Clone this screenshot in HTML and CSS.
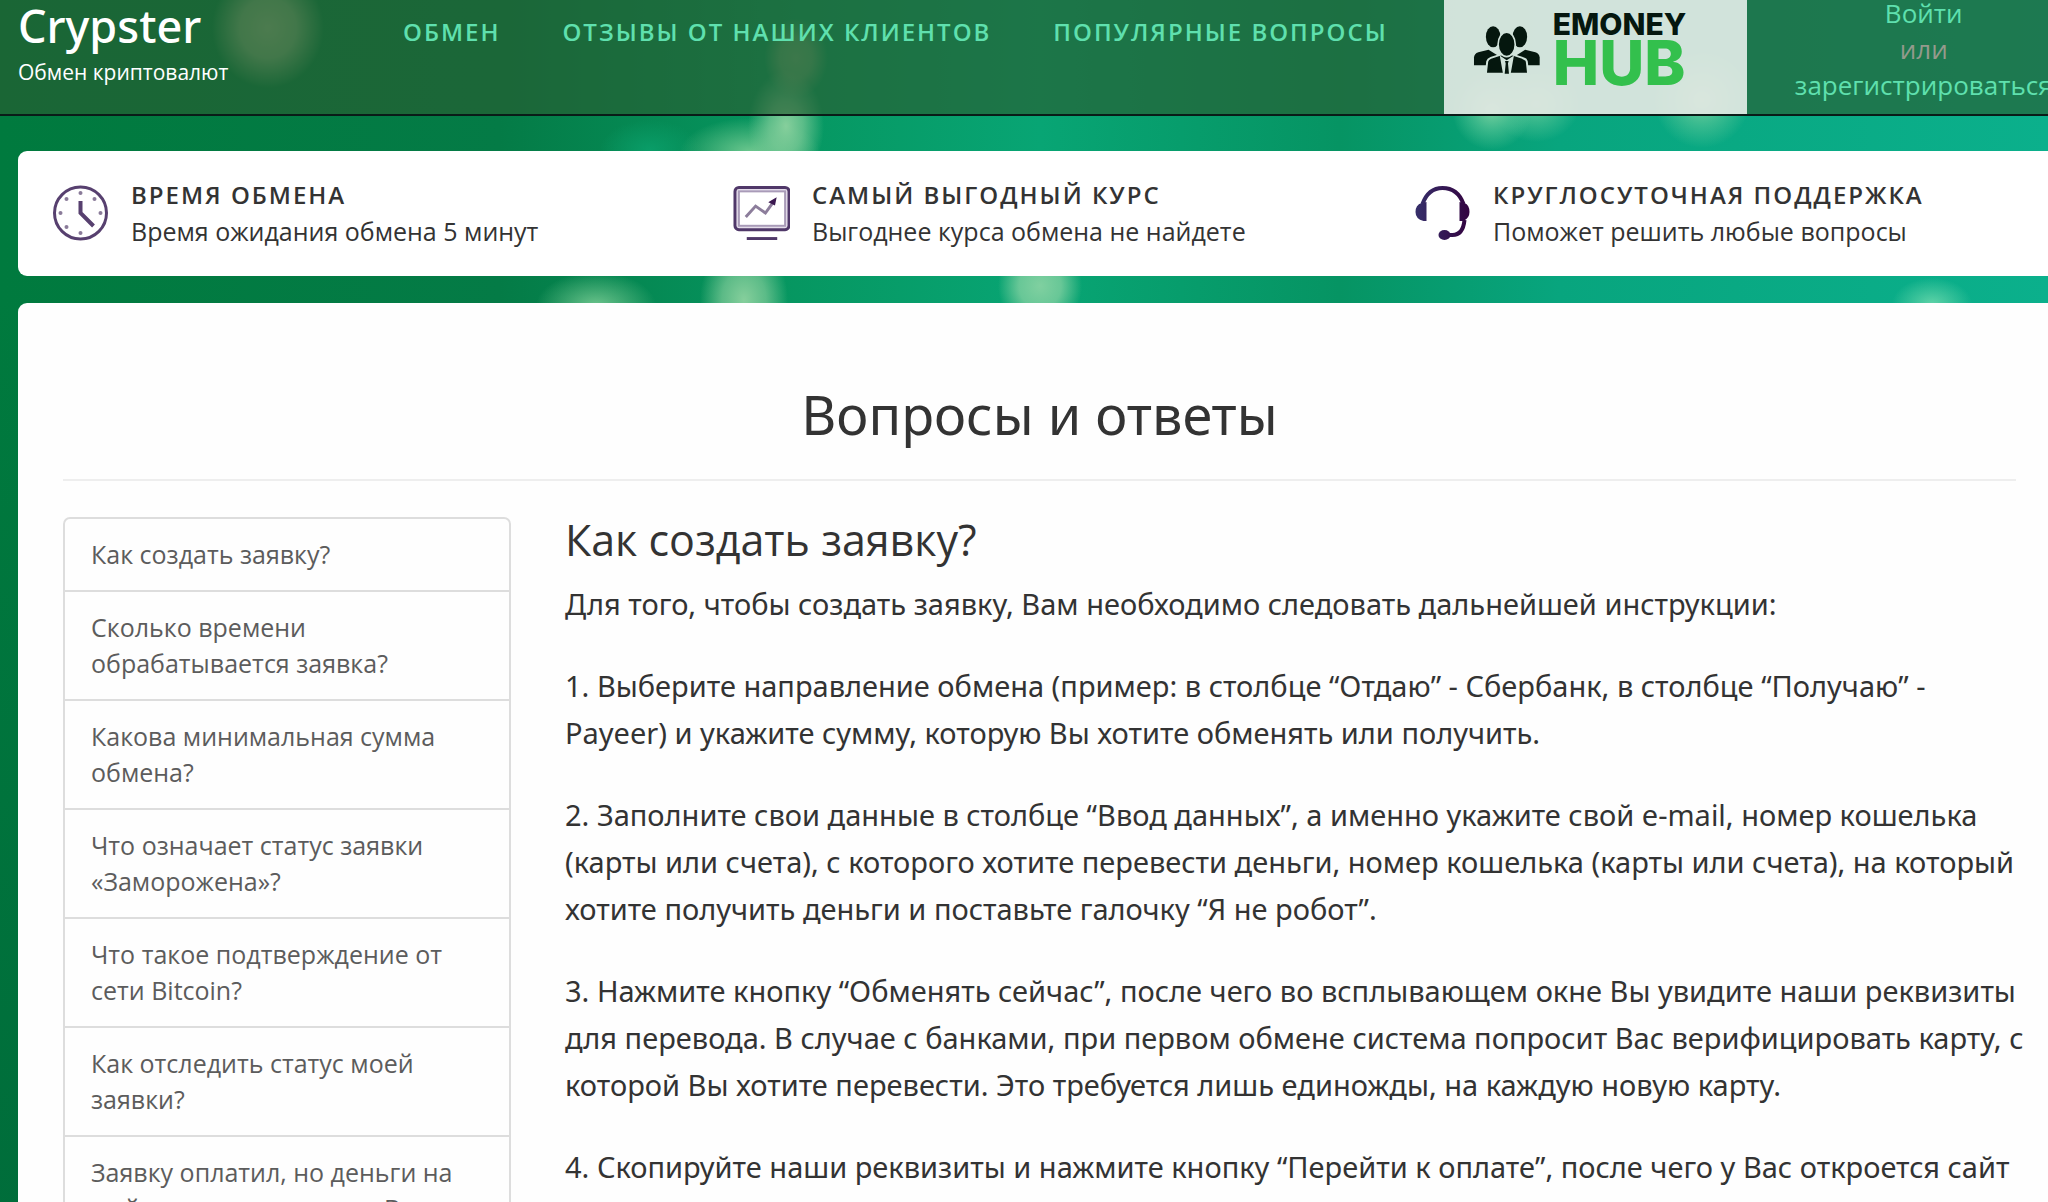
FILE: index.html
```
<!DOCTYPE html>
<html lang="ru">
<head>
<meta charset="utf-8">
<title>Crypster — Вопросы и ответы</title>
<link rel="stylesheet" href="styles.css">
</head>
<body>
<header class="header">
  <a class="brand" href="#">
    <span class="brand-name">Crypster</span>
    <span class="brand-note">Обмен криптовалют</span>
  </a>
  <nav class="nav">
    <a href="#">ОБМЕН</a>
    <a href="#">ОТЗЫВЫ ОТ НАШИХ КЛИЕНТОВ</a>
    <a href="#">ПОПУЛЯРНЫЕ ВОПРОСЫ</a>
  </nav>
  <a class="partner" href="#">
    <svg class="partner-icon" viewBox="96 74 206 150" aria-hidden="true">
      <g fill="#000">
        <ellipse cx="157" cy="109" rx="22" ry="32"/>
        <ellipse cx="238" cy="109" rx="22" ry="32"/>
        <path d="M99 195V172Q100 160 112 156L143 148L170 165V195Z"/>
        <path d="M298 195V172Q297 160 285 156L254 148L228 165V195Z"/>
      </g>
      <path d="M135 221L139 184Q141 176 150 173L180 163H216L246 173Q257 176 259 184L263 221Z" fill="#000" stroke="#fff" stroke-width="6"/>
      <ellipse cx="198" cy="132" rx="26" ry="37" fill="#000" stroke="#fff" stroke-width="5"/>
      <path d="M177 166L187 222H210L220 166L198 180Z" fill="#fff"/>
      <path d="M193 182H204L202 190L205 221H192L195 190Z" fill="#000"/>
    </svg>
    <span class="partner-name"><span class="partner-top">EMONEY</span><span class="partner-hub">HUB</span></span>
  </a>
  <div class="account">
    <a href="#">Войти</a>
    <span>или</span>
    <a href="#">зарегистрироваться</a>
  </div>
</header>

<div class="page">
  <section class="features">
    <div class="feature">
      <svg class="feature-icon" viewBox="0 0 56 56" fill="none" stroke="#57406f" aria-hidden="true">
        <circle cx="28" cy="28" r="26" stroke-width="3"/>
        <path d="M28 16V28L41 41" stroke-width="4"/>
        <g fill="#8a7b99" stroke="none">
          <circle cx="28" cy="8" r="2"/><circle cx="42" cy="14" r="2"/><circle cx="48" cy="28" r="2"/><circle cx="28" cy="48" r="2"/>
          <circle cx="14" cy="42" r="2"/><circle cx="8" cy="28" r="2"/><circle cx="14" cy="14" r="2"/>
        </g>
      </svg>
      <div><h3>ВРЕМЯ ОБМЕНА</h3><p>Время ожидания обмена 5 минут</p></div>
    </div>
    <div class="feature">
      <svg class="feature-icon" viewBox="0 0 58 56" fill="none" stroke="#503869" aria-hidden="true">
        <rect x="2" y="2" width="55" height="43" rx="4" fill="#e4dcea" stroke-width="3"/>
        <rect x="6" y="6" width="47" height="35" fill="#fff" stroke="#a99bb8" stroke-width="2"/>
        <path d="M13 32L23 21L33 28L41 17" stroke="#8c7d9b" stroke-width="3"/>
        <path d="M38 17L43 14L42 19Z" fill="#3b1850" stroke="#3b1850" stroke-width="2"/>
        <path d="M14 54H45" stroke-width="3"/>
      </svg>
      <div><h3>САМЫЙ ВЫГОДНЫЙ КУРС</h3><p>Выгоднее курса обмена не найдете</p></div>
    </div>
    <div class="feature">
      <svg class="feature-icon" viewBox="0 0 56 56" fill="none" aria-hidden="true">
        <defs><linearGradient id="violet" x1="0" x2="56" y1="0" y2="0" gradientUnits="userSpaceOnUse"><stop offset="0" stop-color="#36306b"/><stop offset="1" stop-color="#33023f"/></linearGradient></defs>
        <path d="M8 19C12 8 18 3 28 3S45 8 49 19M50 35C49 45 45 50 38 50H31" stroke="url(#violet)" stroke-width="4"/>
        <path d="M12 17V36H9Q1 34 1 27Q1 20 7 18ZM45 17V36H49Q55 33 55 27Q55 20 50 18Z" fill="url(#violet)"/>
        <ellipse cx="30" cy="50" rx="6" ry="5" fill="url(#violet)"/>
      </svg>
      <div><h3>КРУГЛОСУТОЧНАЯ ПОДДЕРЖКА</h3><p>Поможет решить любые вопросы</p></div>
    </div>
  </section>

  <main class="card">
    <h1>Вопросы и ответы</h1>
    <div class="faq">
      <ul class="topics">
        <li><a href="#">Как создать заявку?</a></li>
        <li><a href="#">Сколько времени обрабатывается заявка?</a></li>
        <li><a href="#">Какова минимальная сумма обмена?</a></li>
        <li><a href="#">Что означает статус заявки «Заморожена»?</a></li>
        <li><a href="#">Что такое подтверждение от сети Bitcoin?</a></li>
        <li><a href="#">Как отследить статус моей заявки?</a></li>
        <li><a href="#">Заявку оплатил, но деньги на мой счет не поступили. В чем причина?</a></li>
      </ul>
      <article class="answer">
        <h2>Как создать заявку?</h2>
        <p>Для того, чтобы создать заявку, Вам необходимо следовать дальнейшей инструкции:</p>
        <p>1. Выберите направление обмена (пример: в столбце “Отдаю” - Сбербанк, в столбце “Получаю” - Payeer) и укажите сумму, которую Вы хотите обменять или получить.</p>
        <p>2. Заполните свои данные в столбце “Ввод данных”, а именно укажите свой e-mail, номер кошелька (карты или счета), с которого хотите перевести деньги, номер кошелька (карты или счета), на который хотите получить деньги и поставьте галочку “Я не робот”.</p>
        <p>3. Нажмите кнопку “Обменять сейчас”, после чего во всплывающем окне Вы увидите наши реквизиты для перевода. В случае с банками, при первом обмене система попросит Вас верифицировать карту, с которой Вы хотите перевести. Это требуется лишь единожды, на каждую новую карту.</p>
        <p>4. Скопируйте наши реквизиты и нажмите кнопку “Перейти к оплате”, после чего у Вас откроется сайт</p>
      </article>
    </div>
  </main>
</div>
</body>
</html>
```
FILE: styles.css
```
* { box-sizing: border-box; margin: 0; }

html { scrollbar-width: none; }

body {
  font-family: "Open Sans", "Noto Sans", sans-serif;
  font-size: 25px;
  line-height: 36px;
  color: #333;
  overflow-x: hidden;
  min-height: 100vh;
  background:
    radial-gradient(ellipse 56px 60px at 268px 28px, #8fb585 0, #8fb585cc 50%, transparent 100%),
    radial-gradient(ellipse 32px 40px at 796px 58px, #8fb585aa 0, #8fb58588 50%, transparent 100%),
    radial-gradient(ellipse 38px 56px at 786px 126px, #86cf9c 0, #86cf9caa 45%, transparent 100%),
    radial-gradient(ellipse 70px 34px at 750px 152px, #6cc78e 0, transparent 100%),
    radial-gradient(ellipse 50px 30px at 650px 150px, #0a9d68 0, transparent 100%),
    radial-gradient(ellipse 44px 60px at 744px 300px, #86cf9c 0, #86cf9caa 50%, transparent 100%),
    radial-gradient(ellipse 60px 34px at 596px 306px, #6cc48c 0, transparent 100%),
    radial-gradient(ellipse 42px 44px at 1040px 286px, #80d0a0 0, #80d0a0cc 50%, transparent 100%),
    radial-gradient(ellipse 40px 40px at 1492px 110px, #74cf9f 0, #5cc89999 50%, transparent 100%),
    radial-gradient(ellipse 44px 38px at 1536px 104px, #5cc899 0, transparent 100%),
    radial-gradient(ellipse 48px 48px at 1702px 100px, #74cf9f 0, #5cc89999 50%, transparent 100%),
    radial-gradient(ellipse 40px 26px at 1932px 304px, #5fd3a8 0, transparent 100%),
    linear-gradient(to bottom, transparent 300px, #00653899 1200px),
    linear-gradient(to right, #007a3e 0, #047b46 500px, #069660 780px, #08a574 1040px, #069463 1340px, #08a57e 1560px, #0bb08c 2048px);
}

a { color: inherit; text-decoration: none; }

.header {
  display: flex;
  align-items: flex-start;
  border-bottom: 2px solid #0a1c18;
  background: rgba(40, 92, 49, .65);
}

.brand { display: flex; flex: none; flex-direction: column; width: 385px; padding-left: 18px; color: #fff; }
.brand-name { font-family: "Noto Sans", "Open Sans", sans-serif; font-size: 45px; font-weight: 500; line-height: 52px; }
.brand-note { font-size: 21px; line-height: 40px; }

.nav {
  display: flex;
  flex: none;
  gap: 62px;
  padding: 14px 56px 0 18px;
  font-size: 24px;
  font-weight: 600;
  letter-spacing: 2px;
  white-space: nowrap;
  color: #5fe0ae;
}

.partner {
  display: flex;
  gap: 12px;
  flex: none;
  width: 303px;
  height: 114px;
  padding-left: 29px;
  background: #fff;
  opacity: .8;
  color: #000;
}
.partner-icon { width: 68px; height: 50px; margin-top: 25px; }
.partner-name { display: flex; flex-direction: column; font-family: Inter, sans-serif; font-weight: 800; }
.partner-top { font-size: 30px; line-height: 28px; padding-top: 10px; }
.partner-hub { font-size: 62px; line-height: 50px; color: #39d34d; }

.account {
  display: flex;
  flex-direction: column;
  align-items: center;
  flex: none;
  width: 260px;
  margin: -5px 0 0 47px;
  font-size: 26px;
  color: #5fe0ae;
}
.account span { color: #949a8c; }

.page { margin: 35px -13px 0 18px; display: flex; flex-direction: column; gap: 27px; }

.features {
  display: grid;
  grid-template-columns: repeat(3, 1fr);
  padding: 26px 0 27px;
  border-radius: 9px;
  background: #fff;
}
.feature { display: flex; align-items: center; gap: 22px; padding-left: 34px; }
.feature-icon { width: 57px; height: 56px; flex: none; }
.feature h3 { font-size: 24px; font-weight: 600; letter-spacing: 2px; }

.card { padding: 81px 45px 36px; border-radius: 9px; background: #fefefe; }
.card h1 {
  padding-bottom: 35px;
  border-bottom: 2px solid #eee;
  font: 400 54px/60px "Noto Sans", "Open Sans", sans-serif;
  text-align: center;
}

.faq { display: flex; align-items: flex-start; gap: 54px; margin: 36px -13px 0 0; }

.topics {
  flex: none;
  width: 448px;
  padding: 0;
  list-style: none;
  border: 2px solid #ddd;
  border-radius: 7px;
  color: #5c5c5c;
}
.topics li + li { border-top: 2px solid #ddd; }
.topics a { display: block; padding: 17px 26px 18px; }

.answer { flex: 1; font: 29px/47px "Noto Sans", "Open Sans", sans-serif; }
.answer h2 { margin-bottom: 17px; font: 400 43px/46px "Open Sans", "Noto Sans", sans-serif; }
.answer p { margin-bottom: 35px; }
```
